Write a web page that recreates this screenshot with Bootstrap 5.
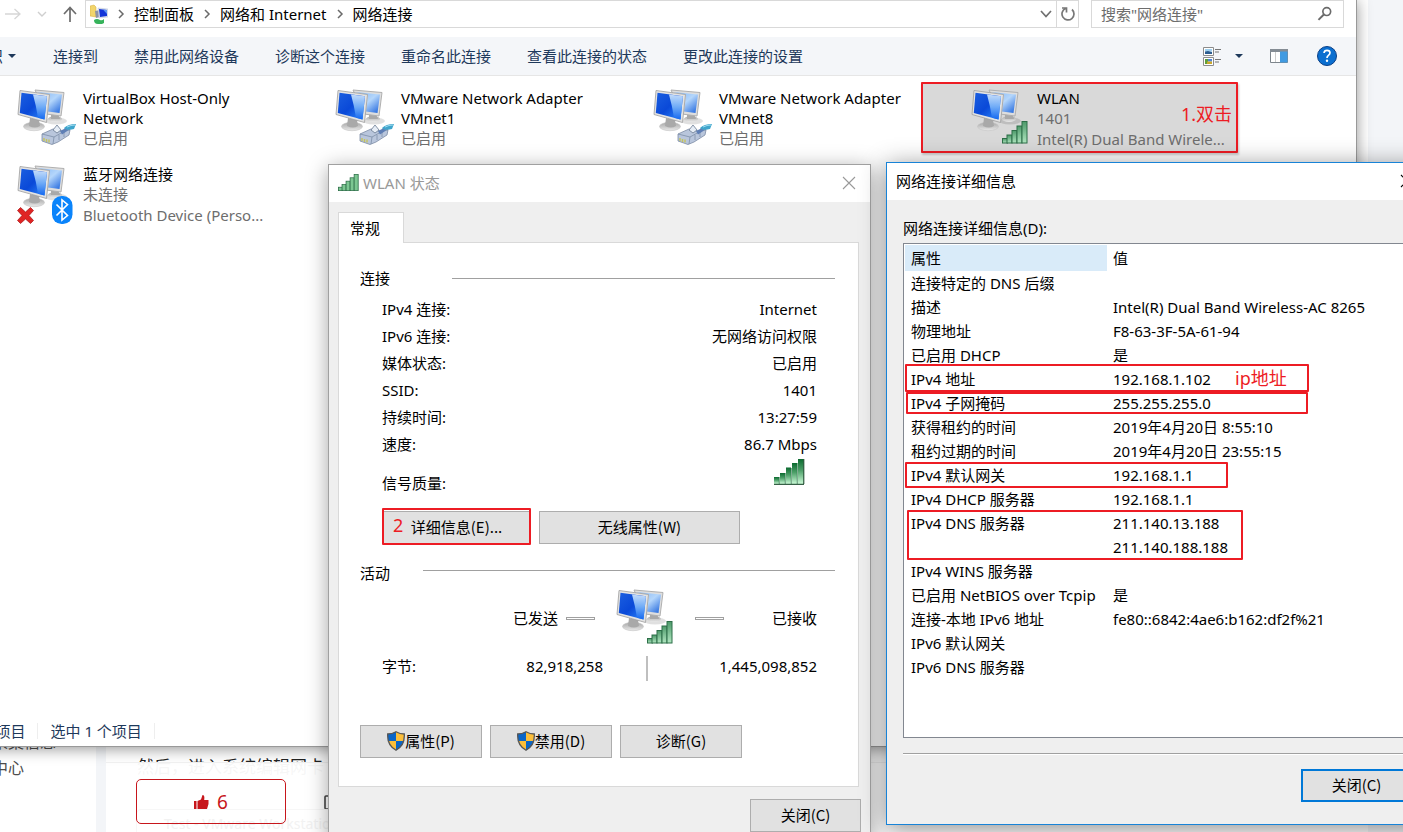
<!DOCTYPE html>
<html lang="zh-CN">
<head>
<meta charset="utf-8">
<meta name="viewport" content="width=device-width, initial-scale=1">
<title>网络连接</title>
<link href="https://cdn.jsdelivr.net/npm/bootstrap@5.3.0/dist/css/bootstrap.min.css" rel="stylesheet">
<style>
  :root { --anno: #ed1c24; --line: #a0a0a0; --face: #efefef; }
  body { font-family: "Noto Sans", "Noto Sans CJK SC", sans-serif; font-size: 15px; line-height: 20px; color: #000; background: #f3f5f8; }
  button, input { font: inherit; color: inherit; }
  .desktop { min-height: 100vh; }
  .win { position: absolute; z-index: 2; }

  /* web page behind the windows */
  .side-col { width: 96px; background: #fff; color: #4d4d4d; font-size: 16px; line-height: 26px; padding-top: 729px; }
  .side-col a { color: inherit; text-indent: -8px; }
  .article { margin: 0 35px 0 10px; background: #fff; padding-top: 752px; }
  .article p { font-size: 17px; line-height: 30px; padding-left: 31px; color: #222; height: 10px; }
  .vote-bar { background: rgba(255,255,255,.96); padding: 16px 30px 8px; border-top: 1px solid #f2f2f2; position: relative; }
  .vote { width: 150px; height: 45px; border: 1px solid #c7161c; border-radius: 5px; background: none; color: #c7161c; font-size: 19px; }
  .vote-bar .reply { background: none; border: 0; padding: 0; margin-left: 38px; }
  .ghost { position: absolute; left: 30px; top: 46px; height: 40px; width: 730px; border: 1px solid #f7f7f7; border-radius: 5px; color: #f2f2f2; font-size: 14px; padding: 4px 0 0 27px; }

  /* explorer */
  .explorer { left: -33px; right: 46px; top: -1px; bottom: 85px; background: #fff; border: 1px solid #999; border-left: 0; box-shadow: 0 2px 14px rgba(0,0,0,.42); }
  .nav-row { height: 37px; padding: 0 12px 10px 38px; }
  .nav-row button, .tools button { background: none; border: 0; padding: 0; }
  .addr, .search { height: 28px; border: 1px solid #d9d9d9; background: #fff; }
  .addr { margin-right: 12px; }
  .addr a { color: #000; }
  .search { width: 253px; }
  .search input { border: 0; outline: 0; color: #6d6d6d; padding: 0 0 0 9px; min-width: 0; }
  .search input::placeholder { color: #6d6d6d; opacity: 1; }
  .nav-row .refresh { width: 22px; height: 26px; border-left: 1px solid #d9d9d9; }
  .tools { height: 39px; background: #f4f6f9; border-bottom: 1px solid #e6e6e6; color: #1e395b; padding: 0 19px 1px 6px; }
  .tools .cmds { gap: 36px; }
  .tools .views { gap: 25px; }
  .conns { padding-top: 6px; row-gap: 5px; }
  .conn { width: 318px; padding: 6px 6px 3px 49px; gap: 7px; position: relative; }
  .conn .title { line-height: 20px; }
  .conn .info { line-height: 21px; color: #6d6d6d; white-space: nowrap; }
  .conn.picked { background: #d9d9d9; box-shadow: 1px 2px 2px rgba(0,0,0,.2); width: 317px; }
  .status-row { color: #1e395b; height: 30px; padding-left: 1px; }
  .status-row span { padding-right: 12px; border-right: 1px solid #eee; margin-right: 12px; line-height: 16px; }

  /* red notes */
  .note { position: absolute; color: var(--anno); font-size: 18px; line-height: 24px; pointer-events: none; }
  .ring { position: absolute; border: 2px solid var(--anno); border-radius: 1px; pointer-events: none; }

  /* dialogs */
  .dlg { background: var(--face); }
  .dlg .cap { height: 37px; background: #fff; padding: 0 14px 2px 9px; }
  .dlg .cap button { border: 0; background: none; padding: 0; }
  .push { height: 33px; background: #e1e1e1; border: 1px solid #adadad; padding: 0 0 1px; white-space: nowrap; font-family: "Noto Sans CJK SC", sans-serif; }
  .push.main { border: 2px solid #0078d7; }
  .w-sm { width: 122px; } .w-close { width: 111px; }
  .status { left: 328px; top: 164px; width: 543px; border: 1px solid var(--line); box-shadow: 0 4px 20px rgba(0,0,0,.36); }
  .status .cap { color: #999; }
  .status .body { padding: 10px 9px; }
  .tab { width: 66px; height: 31px; background: #fff; border: 1px solid #d9d9d9; border-bottom: 0; margin-bottom: -1px; position: relative; z-index: 1; padding: 0 12px 1px 0; }
  .pane { background: #fff; border: 1px solid #d9d9d9; padding: 25px 23px 28px 21px; margin-right: 2px; }
  .rule { height: 1px; background: var(--line); }
  .facts { padding: 7px 18px 0 22px; }
  .facts dl > div { height: 27px; }
  .facts dt, .facts dd { font-weight: 400; margin: 0; }
  .quality { padding: 1px 8px 18px 0; }
  .activity { padding: 19px 0 5px; }
  .activity .rule { margin-bottom: 6px; }
  .wire { width: 29px; height: 3px; border: 1px solid var(--line); }
  .traffic { display: grid; grid-template-columns: 221px 87px 1fr; align-items: center; padding: 0 18px 0 22px; }
  .traffic .pics { margin-left: 12px; }
  .traffic .inbound { padding-left: 5px; }

  .details { left: 886px; top: 162px; width: 543px; border: 1px solid #1883d7; box-shadow: 0 4px 24px rgba(0,0,0,.45); }
  .details .body { padding: 18px 16px 22px; }
  .list { height: 495px; margin-top: 5px; background: #fff; border: 1px solid #828790; padding: 1px; position: relative; }
  .list table { width: 100%; border-collapse: collapse; }
  .list th, .list td { font-weight: 400; padding: 0 6px; height: 24px; text-align: left; white-space: nowrap; }
  .list thead th { height: 26px; }
  .list thead th:first-child { background: #d9ebf9; width: 202px; }
  .groove { border-top: 1px solid var(--line); border-bottom: 1px solid #fff; margin: 15px 0 14px; height: 2px; }
</style>
</head>
<body class="overflow-hidden">
<svg width="0" height="0" class="position-absolute" aria-hidden="true">
  <defs>
    <linearGradient id="gScr" x1="0" y1="0" x2="1" y2="1"><stop offset="0" stop-color="#1b5fe0"/><stop offset=".5" stop-color="#0a49d8"/><stop offset="1" stop-color="#2f8dff"/></linearGradient>
    <linearGradient id="gShine" x1="0" y1="0" x2="0" y2="1"><stop offset="0" stop-color="#c4dcfa"/><stop offset=".5" stop-color="#6fabf7"/><stop offset="1" stop-color="#1468f0"/></linearGradient>
    <linearGradient id="gBack" x1="0" y1="0" x2="1" y2="1"><stop offset="0" stop-color="#7fb3f2"/><stop offset=".5" stop-color="#b4d6fb"/><stop offset="1" stop-color="#1a62dc"/></linearGradient>
    <linearGradient id="gFoot" x1="0" y1="0" x2="0" y2="1"><stop offset="0" stop-color="#a6a6a6"/><stop offset="1" stop-color="#e9e9e9"/></linearGradient>
    <linearGradient id="gBar" x1="0" y1="0" x2="0" y2="1"><stop offset="0" stop-color="#4d9a6a"/><stop offset="1" stop-color="#b0e6c0"/></linearGradient>
    <linearGradient id="gBarDk" x1="0" y1="0" x2="0" y2="1"><stop offset="0" stop-color="#0b6a2f"/><stop offset=".45" stop-color="#4c9f68"/><stop offset="1" stop-color="#ccfbd8"/></linearGradient>
    <g id="pcs">
      <ellipse cx="40" cy="33" rx="11" ry="3.500" fill="#000" opacity=".12"/>
      <ellipse cx="39" cy="31" rx="7" ry="3" fill="url(#gFoot)"/>
      <path d="M35 25l7 1 2 5h-9z" fill="#a9a9a9"/>
      <path d="M19 2L48 4.500 45 28 30 26z" fill="#dedede" stroke="#b0b0b0"/>
      <path d="M21 4L46 6.500 43.500 25 32 23.500 34 7z" fill="url(#gBack)"/>
      <ellipse cx="18" cy="38.500" rx="10.500" ry="4.200" fill="url(#gFoot)" stroke="#c4c4c4" stroke-width=".6"/>
      <path d="M14 30l9 2 1 6q-5 3-11 0z" fill="#a9a9a9"/>
      <path d="M4 2.500L33.500 6.500 30.500 34.500 2 26.500z" fill="#e3e3e3" stroke="#9d9d9d" stroke-width=".8"/>
      <path d="M5.500 4.800L31 8.300 28.500 31.500 3.800 25z" fill="url(#gScr)"/>
      <path d="M17 6.400L31 8.300 28.500 31.500 22 29.800Q20 17 17 6.400z" fill="url(#gShine)"/>
    </g>
    <g id="bars5" stroke="#2d6f48" stroke-width="1"><rect x=".5" y="17.500" width="5" height="4.500"/><rect x="5" y="14" width="5" height="8"/><rect x="10" y="9.500" width="5" height="12.500"/><rect x="15" y="5" width="5" height="17"/><rect x="20" y=".5" width="5" height="21.500"/></g>
    <symbol id="i-pc" viewBox="0 0 60 60"><use href="#pcs"/></symbol>
    <symbol id="i-lan" viewBox="0 0 60 60"><use href="#pcs"/>
      <path d="M48 40q4-4 12-4l-2 5q-4 0-7 3z" fill="#3fa5cc"/><path d="M51 39q4-2 8-2" stroke="#9edcf0" fill="none"/>
      <path d="M26 46L37 41 46 43 54 42 53 47 42 54 36 56.500 26 53z" fill="#b9c6dc" stroke="#7c8ca5" stroke-width=".8"/>
      <path d="M26 46l12 3 9-5M38 49l-1 7M43 47v5M48 44v5" stroke="#7e8fa8" stroke-width=".8" fill="none"/>
      <path d="M37 42l4-5 4 5-4 3z" fill="#e6edf6" stroke="#6b7b92" stroke-width=".8"/>
      <path d="M44 43l5-2.500 3 2-6 4z" fill="#5f7fb5"/>
      <path d="M28 50v3M30.500 51v3M33 51.500v3" stroke="#c6c45c" stroke-width="1.400"/>
    </symbol>
    <symbol id="i-wifi" viewBox="0 0 60 60"><use href="#pcs"/><use href="#bars5" x="32" y="33" fill="url(#gBar)"/></symbol>
    <symbol id="i-bt" viewBox="0 0 60 60"><use href="#pcs"/>
      <rect x="36" y="32" width="20.500" height="28" rx="9.500" fill="#0b84fb"/>
      <path d="M40.500 40.500L51.500 51.500 46 56V36l5.500 4.500L40.500 51.500" fill="none" stroke="#fff" stroke-width="1.600"/>
      <path d="M1.500 46.500L4.500 43.500 9.500 48 14.500 43.500 17.500 46.500 13 51.500 17.500 56.500 14.500 59.500 9.500 55 4.500 59.500 1.500 56.500 6 51.500z" fill="#e02424" stroke="#a81212" stroke-width=".7"/>
    </symbol>
    <symbol id="i-shield" viewBox="0 0 18 20">
      <path d="M9 .7Q13 3 17.300 3 18 14.500 9 19.300 0 14.500 .700 3 5 3 9 .700z" fill="#fcbf3a"/>
      <path d="M9 .7Q5 3 .7 3q-.2 3 .3 7H9zM9 10h8q-1.500 6-8 9.300z" fill="#0a66c8"/>
      <path d="M9 .7Q13 3 17.300 3 18 14.500 9 19.300 0 14.500 .700 3 5 3 9 .700z" fill="none" stroke="#575757" stroke-width="1.300"/>
    </symbol>
    <symbol id="i-sep" viewBox="0 0 6 10"><path d="M1 1l4 4-4 4" fill="none" stroke="#6a6a6a" stroke-width="1.500"/></symbol>
    <symbol id="i-x" viewBox="0 0 14 14"><path d="M1 1l12 12M13 1L1 13" fill="none" stroke="currentColor" stroke-width="1.100"/></symbol>
  </defs>
</svg>

<div class="desktop position-relative overflow-hidden d-flex vh-100">
  <aside class="side-col flex-shrink-0 overflow-hidden">
    <a href="#" class="d-block text-decoration-none text-nowrap">采集信息</a>
    <a href="#" class="d-block text-decoration-none text-nowrap">中心</a>
  </aside>
  <main class="article flex-grow-1">
    <p class="mb-0 overflow-visible text-nowrap">然后，进入系统编辑网卡</p>
    <div class="vote-bar d-flex align-items-center">
      <div class="ghost">Test - VMware Workstation</div>
      <button class="vote position-relative d-flex align-items-center justify-content-center gap-2">
        <svg width="15" height="14" viewBox="0 0 15 14" aria-hidden="true"><path d="M0 6h2.500v8H0zM3.500 6L7 4.500 8.500 0Q11 0 10.200 5H14.500V9L13 14H3.500z" fill="#c7161c"/></svg><span>6</span>
      </button>
      <button class="reply" aria-label="评论"><svg width="16" height="16" viewBox="0 0 16 16"><rect x="1" y="1" width="14" height="13" rx="1" fill="none" stroke="#444" stroke-width="1.600"/><path d="M4 7.500h8" stroke="#444" stroke-width="2"/></svg></button>
    </div>
  </main>

  <section class="win explorer d-flex flex-column" aria-label="网络连接">
    <div class="nav-row d-flex align-items-center">
      <button class="d-flex" aria-label="前进"><svg width="16" height="12" viewBox="0 0 16 12"><path d="M0 6h15M9.500 1l5.500 5-5.500 5" fill="none" stroke="#d6d6d6" stroke-width="1.300"/></svg></button>
      <button class="d-flex ms-3" aria-label="最近位置"><svg width="10" height="6" viewBox="0 0 10 6"><path d="M1 1l4 4 4-4" fill="none" stroke="#cfcfcf" stroke-width="1.400"/></svg></button>
      <button class="d-flex ms-3 me-2" aria-label="上移"><svg width="14" height="16" viewBox="0 0 14 16"><path d="M7 16V2M1 8l6-6.500L13 8" fill="none" stroke="#6d6d6d" stroke-width="1.700"/></svg></button>
      <div class="addr d-flex align-items-center flex-grow-1">
        <svg class="ms-1 me-1" width="18" height="20" viewBox="1 0 18 20" aria-hidden="true"><path d="M1 2l4-1 2 2v10l-6-1z" fill="#f2d56b" stroke="#d3ab3c" stroke-width=".5"/><path d="M6 7l5-1v7l-4 1z" fill="#8e93a5"/><path d="M9 4l10 1v8l-9 1z" fill="#dfe3ea" stroke="#b9c3d8" stroke-width=".5"/><path d="M10 5l8 1v6l-7 1z" fill="#1235d8"/><path d="M14 5.500l4 .5V10z" fill="#5e97f4"/><path d="M5 16q3-2 6 0 2 1 4-1v4q-3 2-6 1-4 0-4-4z" fill="#36b35b"/></svg>
        <svg class="ms-1 me-2" width="10" height="10"><use href="#i-sep"/></svg>
        <a href="#" class="text-decoration-none text-nowrap">控制面板</a>
        <svg class="mx-2" width="10" height="10"><use href="#i-sep"/></svg>
        <a href="#" class="text-decoration-none text-nowrap">网络和 Internet</a>
        <svg class="mx-2" width="10" height="10"><use href="#i-sep"/></svg>
        <a href="#" class="text-decoration-none text-nowrap">网络连接</a>
        <button class="d-flex ms-auto me-1" aria-label="展开"><svg width="12" height="8" viewBox="0 0 12 8"><path d="M1 1l5 5.500L11 1" fill="none" stroke="#707070" stroke-width="1.700"/></svg></button>
        <button class="refresh d-flex align-items-center justify-content-center" aria-label="刷新"><svg width="14" height="15" viewBox="0 0 14 15"><path d="M4.500 2.500A6 6 0 1 0 11 3.500M1 2h4.500v4.500" fill="none" stroke="#777" stroke-width="1.700"/></svg></button>
      </div>
      <div class="search d-flex align-items-center">
        <input class="flex-grow-1" type="text" aria-label="搜索" placeholder='搜索"网络连接"'>
        <svg class="me-2" width="18" height="16" viewBox="0 0 18 16" aria-hidden="true"><circle cx="10" cy="5.500" r="4" fill="none" stroke="#6a6a6a" stroke-width="1.700"/><path d="M7 8.500L1.500 14" stroke="#6a6a6a" stroke-width="2"/></svg>
      </div>
    </div>
    <div class="tools d-flex align-items-center justify-content-between">
      <div class="cmds d-flex text-nowrap">
        <button class="d-flex align-items-center">组织<svg class="ms-1" width="10" height="6" viewBox="0 0 10 6"><path d="M1 1h8L5 5z" fill="#1e395b"/></svg></button>
        <button>连接到</button><button>禁用此网络设备</button><button>诊断这个连接</button><button>重命名此连接</button><button>查看此连接的状态</button><button>更改此连接的设置</button>
      </div>
      <div class="views d-flex align-items-center">
        <button class="d-flex align-items-center" aria-label="更改视图"><svg width="32" height="20" viewBox="0 0 32 20"><path d="M.5 1.500h10v8H.5zM.5 11.500h10v8H.5z" fill="#fff" stroke="#8c8c8c"/><path d="M2 3h7v2.500H2z" fill="#9fd0ef"/><path d="M2 5.500l3-.5 4 1v2H2z" fill="#2c5c8f"/><path d="M2 13h3v5H2z" fill="#5f9f3a"/><path d="M5 13h4v2.500H5z" fill="#4d84d8"/><path d="M4 15.500h5V18H4z" fill="#caa72c"/><path d="M12 3.500h6M12 6h4M12 13.500h6M12 16h4" stroke="#777" /></svg><svg width="10" height="6" viewBox="0 0 10 6"><path d="M0 1h8L4 5z" fill="#1e395b"/></svg></button>
        <button class="d-flex" aria-label="预览窗格"><svg width="18" height="14" viewBox="0 0 18 14"><path d="M.5.500h17v13H.5z" fill="#fff" stroke="#7d858c"/><path d="M0 0h18v3H0z" fill="#848c94"/><path d="M10 2.500h7.500v11H10z" fill="#409ae1"/><path d="M5.500 3v10" stroke="#ccc"/></svg></button>
        <button class="d-flex" aria-label="帮助"><svg class="ms-1" width="20" height="20" viewBox="0 0 20 20"><circle cx="10" cy="10" r="9.500" fill="#0b6fd0" stroke="#0a3f86"/><path d="M7 7q.3-2.700 3-2.700 3 0 3 2.500 0 1.500-1.600 2.600Q10 10.500 10 12" fill="none" stroke="#fff" stroke-width="1.700"/><circle cx="10" cy="14.800" r="1.200" fill="#fff"/></svg></button>
      </div>
    </div>
    <div class="conns d-flex flex-wrap align-content-start flex-grow-1">
      <div class="conn d-flex"><svg class="flex-shrink-0" width="60" height="60"><use href="#i-lan"/></svg><div><div class="title">VirtualBox Host-Only Network</div><div class="info">已启用</div></div></div>
      <div class="conn d-flex"><svg class="flex-shrink-0" width="60" height="60"><use href="#i-lan"/></svg><div><div class="title">VMware Network Adapter VMnet1</div><div class="info">已启用</div></div></div>
      <div class="conn d-flex"><svg class="flex-shrink-0" width="60" height="60"><use href="#i-lan"/></svg><div><div class="title">VMware Network Adapter VMnet8</div><div class="info">已启用</div></div></div>
      <div class="conn picked d-flex"><svg class="flex-shrink-0" width="60" height="60"><use href="#i-wifi"/></svg><div><div class="title">WLAN</div><div class="info">1401</div><div class="info">Intel(R) Dual Band Wirele...</div></div>
        <span class="ring top-0 start-0 w-100 h-100"></span><span class="note" style="right:6px;top:20px">1.双击</span></div>
      <div class="conn d-flex"><svg class="flex-shrink-0" width="60" height="60"><use href="#i-bt"/></svg><div><div class="title">蓝牙网络连接</div><div class="info">未连接</div><div class="info">Bluetooth Device (Perso...</div></div></div>
    </div>
    <div class="status-row d-flex align-items-center text-nowrap"><span>5 个项目</span><span>选中 1 个项目</span></div>
  </section>

  <section class="win dlg status" role="dialog" aria-label="WLAN 状态">
    <div class="cap d-flex align-items-center"><svg class="me-1" width="21" height="17" viewBox="0 0 26 22.500" preserveAspectRatio="none" aria-hidden="true"><use href="#bars5" fill="#7cc792"/></svg><span>WLAN 状态</span>
      <button class="ms-auto d-flex" aria-label="关闭"><svg width="14" height="14"><use href="#i-x"/></svg></button></div>
    <div class="body">
      <div class="tab d-flex align-items-center justify-content-center">常规</div>
      <div class="pane">
        <div class="d-flex align-items-center"><span style="width:92px">连接</span><div class="rule flex-grow-1"></div></div>
        <div class="facts">
          <dl class="mb-0">
            <div class="d-flex justify-content-between align-items-center"><dt>IPv4 连接:</dt><dd>Internet</dd></div>
            <div class="d-flex justify-content-between align-items-center"><dt>IPv6 连接:</dt><dd>无网络访问权限</dd></div>
            <div class="d-flex justify-content-between align-items-center"><dt>媒体状态:</dt><dd>已启用</dd></div>
            <div class="d-flex justify-content-between align-items-center"><dt>SSID:</dt><dd>1401</dd></div>
            <div class="d-flex justify-content-between align-items-center"><dt>持续时间:</dt><dd>13:27:59</dd></div>
            <div class="d-flex justify-content-between align-items-center"><dt>速度:</dt><dd>86.7 Mbps</dd></div>
          </dl>
          <div class="quality d-flex justify-content-between align-items-end">
            <span>信号质量:</span>
            <svg class="me-1 mb-2" width="31" height="27" viewBox="0 0 31 27" role="img" aria-label="信号强"><g fill="url(#gBarDk)"><rect x="0" y="19" width="5" height="7"/><rect x="6" y="15" width="5" height="11"/><rect x="12" y="9.500" width="5" height="16.500"/><rect x="18" y="5" width="5" height="21"/><rect x="24" y="1" width="5.500" height="25"/></g><path d="M0 26.300h30M29.800 1v25" fill="none" stroke="#06391a"/><path d="M5.300 19v7M11.300 15v11M17.300 10v16M23.300 5v21" stroke="#1b6b3a" stroke-width=".7"/></svg>
          </div>
          <div class="d-flex gap-2">
            <div class="position-relative"><button class="push" style="width:149px">详细信息(E)...</button>
              <span class="ring start-0 w-100" style="top:-3px;bottom:-1px"></span><span class="note" style="left:11px;top:2px">2</span></div>
            <button class="push" style="width:201px">无线属性(W)</button>
          </div>
        </div>
        <div class="activity d-flex align-items-center"><span style="width:63px">活动</span><div class="rule flex-grow-1"></div></div>
        <div class="traffic">
          <div class="d-flex align-items-center justify-content-end gap-2 pe-2"><span>已发送</span><span class="wire"></span></div>
          <svg class="pics" width="60" height="60"><use href="#i-wifi"/></svg>
          <div class="inbound d-flex align-items-center justify-content-between"><span class="wire"></span><span>已接收</span></div>
        </div>
        <div class="traffic align-items-start mt-2">
          <div class="d-flex justify-content-between"><span>字节:</span><span>82,918,258</span></div>
          <div class="vr mx-auto" style="height:25px;width:2px"></div>
          <div class="text-end">1,445,098,852</div>
        </div>
        <div class="d-flex gap-2" style="margin-top:44px">
          <button class="push w-sm d-flex align-items-center justify-content-center"><svg width="18" height="20"><use href="#i-shield"/></svg>属性(P)</button>
          <button class="push w-sm d-flex align-items-center justify-content-center"><svg width="18" height="20"><use href="#i-shield"/></svg>禁用(D)</button>
          <button class="push w-sm">诊断(G)</button>
        </div>
      </div>
      <div class="d-flex justify-content-end mt-2 pt-1"><button class="push w-close">关闭(C)</button></div>
    </div>
  </section>

  <section class="win dlg details" role="dialog" aria-label="网络连接详细信息">
    <div class="cap d-flex align-items-center"><span>网络连接详细信息</span>
      <button class="ms-auto d-flex" aria-label="关闭"><svg width="14" height="14"><use href="#i-x"/></svg></button></div>
    <div class="body">
      <div id="listLabel">网络连接详细信息(D):</div>
      <div class="list">
        <table aria-labelledby="listLabel">
          <thead><tr><th>属性</th><th>值</th></tr></thead>
          <tbody>
            <tr><td>连接特定的 DNS 后缀</td><td></td></tr>
            <tr><td>描述</td><td>Intel(R) Dual Band Wireless-AC 8265</td></tr>
            <tr><td>物理地址</td><td>F8-63-3F-5A-61-94</td></tr>
            <tr><td>已启用 DHCP</td><td>是</td></tr>
            <tr><td>IPv4 地址</td><td>192.168.1.102</td></tr>
            <tr><td>IPv4 子网掩码</td><td>255.255.255.0</td></tr>
            <tr><td>获得租约的时间</td><td>2019年4月20日 8:55:10</td></tr>
            <tr><td>租约过期的时间</td><td>2019年4月20日 23:55:15</td></tr>
            <tr><td>IPv4 默认网关</td><td>192.168.1.1</td></tr>
            <tr><td>IPv4 DHCP 服务器</td><td>192.168.1.1</td></tr>
            <tr><td>IPv4 DNS 服务器</td><td>211.140.13.188</td></tr>
            <tr><td></td><td>211.140.188.188</td></tr>
            <tr><td>IPv4 WINS 服务器</td><td></td></tr>
            <tr><td>已启用 NetBIOS over Tcpip</td><td>是</td></tr>
            <tr><td>连接-本地 IPv6 地址</td><td>fe80::6842:4ae6:b162:df2f%21</td></tr>
            <tr><td>IPv6 默认网关</td><td></td></tr>
            <tr><td>IPv6 DNS 服务器</td><td></td></tr>
          </tbody>
        </table>
        <span class="ring" style="left:1px;top:120px;width:404px;height:28px"></span>
        <span class="ring" style="left:2px;top:148px;width:402px;height:22px"></span>
        <span class="ring" style="left:1px;top:218px;width:323px;height:26px"></span>
        <span class="ring" style="left:3px;top:266px;width:336px;height:50px"></span>
        <span class="note" style="left:331px;top:122px">ip地址</span>
      </div>
      <div class="groove"></div>
      <div class="d-flex justify-content-end"><button class="push main w-close">关闭(C)</button></div>
    </div>
  </section>
</div>
<script src="https://cdn.jsdelivr.net/npm/bootstrap@5.3.0/dist/js/bootstrap.bundle.min.js"></script>
</body>
</html>
